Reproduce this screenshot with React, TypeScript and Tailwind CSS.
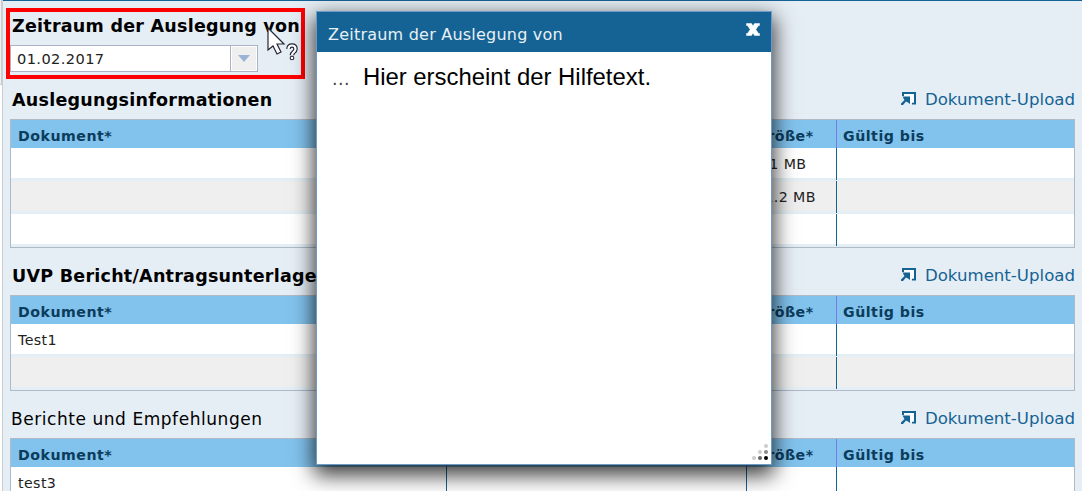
import React from "react";

const UploadIcon = () => (
  <svg width="15" height="15" viewBox="0 0 15 15" className="mb-[4px] block">
    <path d="M1 1h14v12.500h-4v-2h2V3H3v2H1z" fill="#156394" />
    <path d="M3 3h10v8.500H9V6H3z" fill="#fff" />
    <path d="M1.500 5.500H9v7.500L7 11.500 5 10.500 2 14H0v-1.500L3.500 9z" fill="#156394" />
  </svg>
);

function Heading({ title, bold, upload = true }: { title: string; bold?: boolean; upload?: boolean }) {
  return (
    <div className="flex h-[22px] items-center justify-between">
      <h2
        className={
          bold
            ? "whitespace-nowrap pl-[2px] text-[17.5px] font-bold leading-[22px] tracking-[0.25px] text-black"
            : "whitespace-nowrap pl-[1px] text-[17px] leading-[22px] tracking-[0.55px] text-black"
        }
      >
        {title}
      </h2>
      {upload && (
        <a className="flex items-center gap-[9px] whitespace-nowrap text-[16.6px] leading-[22px] text-[#156394]">
          <UploadIcon />
          Dokument-Upload
        </a>
      )}
    </div>
  );
}

const GRID = "grid grid-cols-[435px_299px_89px_1fr] gap-x-px";

function Table({ rows }: { rows: string[][] }) {
  return (
    <div className="w-[1065px] border border-[#b0b9c6] text-[14.2px] text-[#222]">
      <div className={GRID + " h-7 bg-[#82c3ed] font-bold leading-[32px] tracking-[0.5px] text-[#0c3c5c]"}>
        <div className="h-7 pl-[7px]">Dokument*</div>
        <div className="-ml-px h-7 border-l border-[#7a7af0]" />
        <div className="-ml-px h-7 border-l border-[#7a7af0] pl-[8px]">Größe*</div>
        <div className="-ml-px h-7 border-l border-[#7a7af0] pl-[6px]">Gültig bis</div>
      </div>
      {rows.map((row, i) => (
        <div key={i} className={GRID + " h-[33px] border-b-[3px] border-[#e4eff5] leading-[32px] tracking-[0.4px] " + (i % 2 ? "bg-[#efefef]" : "bg-white")}>
          <div className="h-[30px] pl-[7px]">{row[0]}</div>
          <div className="-ml-px h-[32px] border-l border-[#156394]" />
          <div className="-ml-px h-[32px] border-l border-[#156394] pl-[8px]">{row[1]}</div>
          <div className="-ml-px h-[32px] border-l border-[#156394]" />
        </div>
      ))}
    </div>
  );
}

function Dialog() {
  return (
    <section className="absolute left-[316px] top-[11px] h-[454px] w-[456px] border border-[#6b9bc6] bg-white shadow-[0_8px_20px_2px_rgba(0,0,0,0.78)]">
      <header className="flex h-10 items-start justify-between bg-[#156394] pl-[11px] pr-[11px]">
        <h1 className="pt-[12px] text-[16px] leading-[22px] tracking-[0.22px] text-[#e8f0f6]">Zeitraum der Auslegung von</h1>
        <svg width="14" height="13" viewBox="0 0 14 13" className="mt-[11px]">
          <path d="M.5.500h5L7 3 8.500.500h5v2h-1L9.800 6.500l2.700 4h1v2h-5L7 10l-1.500 2.500h-5v-2h1l2.700-4-2.700-4h-1z" fill="#fff" stroke="#fff" strokeWidth=".5" />
        </svg>
      </header>
      <div className="flex items-baseline gap-[13px] whitespace-nowrap pl-[15px] pt-[10px] leading-[30px]">
        <span className="text-[17.500px] tracking-[0.4px] text-[#444]">...</span>
        <span className="font-['Liberation_Sans',sans-serif] text-[23.900px] text-black">Hier erscheint der Hilfetext.</span>
      </div>
      <svg width="16" height="16" viewBox="0 0 16 16" className="absolute bottom-[4px] right-[3px]">
        <circle cx="14" cy="2" r="2" fill="#ccc" />
        <circle cx="8" cy="8" r="2" fill="#ccc" />
        <circle cx="14" cy="8" r="2" fill="#888" />
        <circle cx="2" cy="14" r="2" fill="#ccc" />
        <circle cx="8" cy="14" r="2" fill="#666" />
        <circle cx="14" cy="14" r="2" fill="#000" />
      </svg>
    </section>
  );
}

export default function App() {
  return (
    <div className="relative flex h-[491px] w-[1082px] overflow-hidden bg-white font-['DejaVu_Sans',sans-serif]">
      <div className="w-[3px] border-r border-[#c9cdd1]">
        <div className="h-[85px] border-b border-r border-[#c9cdd1] bg-[#efefef]" />
      </div>
      <main className="flex flex-1 flex-col border-t border-[#156394] bg-[#e6eef5] pl-[3px] pt-[7px]">
        <div className="flex h-[71px] w-[299px] shrink-0 flex-col border-4 border-[#ff0000] pt-[3px]">
          <Heading title="Zeitraum der Auslegung von" bold upload={false} />
          <div className="mt-[8px] flex h-[27px] w-[248px] shrink-0 border border-[#abb3c3] bg-white">
            <span className="flex-1 pl-[6px] text-[14.600px] leading-[26px] tracking-[0.4px] text-[#222]">01.02.2017</span>
            <span className="flex w-[27px] items-center justify-center border-l border-[#abb3c3] bg-[#efefef] shadow-[inset_0_0_0_1px_#fff]">
              <svg width="12" height="7" viewBox="0 0 12 7">
                <path d="M0 0h12L6 7z" fill="#9bb3d6" />
              </svg>
            </span>
          </div>
        </div>
        <div className="ml-[4px] mt-[10px] w-[1065px]">
          <Heading title="Auslegungsinformationen" bold />
          <div className="mt-[8px]">
            <Table rows={[["", "3.1 MB"], ["", "11.2 MB"], ["", ""]]} />
          </div>
          <div className="mt-[17px]">
            <Heading title="UVP Bericht/Antragsunterlagen" bold />
          </div>
          <div className="mt-[8px]">
            <Table rows={[["Test1", ""], ["", ""]]} />
          </div>
          <div className="mt-[17px]">
            <Heading title="Berichte und Empfehlungen" />
          </div>
          <div className="mt-[8px]">
            <Table rows={[["test3", ""]]} />
          </div>
        </div>
      </main>
      <Dialog />
      <svg width="34" height="38" viewBox="0 0 34 38" className="absolute left-[266px] top-[26px]">
        <path d="M2 2v22l5-4 4 8 4-2-4-8h7z" fill="#fff" stroke="#252538" strokeWidth="1.200" />
        <path d="M22.500 23q0-3.500 3.500-3.500t3.500 3.500q0 1.800-2 3.300-1.500 1-1.500 3" fill="none" stroke="#252538" strokeWidth="4.500" />
        <path d="M22.500 23q0-3.500 3.500-3.500t3.500 3.500q0 1.800-2 3.300-1.500 1-1.500 3" fill="none" stroke="#fff" strokeWidth="2.200" />
        <circle cx="26" cy="32" r="1.800" fill="#fff" stroke="#252538" strokeWidth="1.100" />
      </svg>
    </div>
  );
}
